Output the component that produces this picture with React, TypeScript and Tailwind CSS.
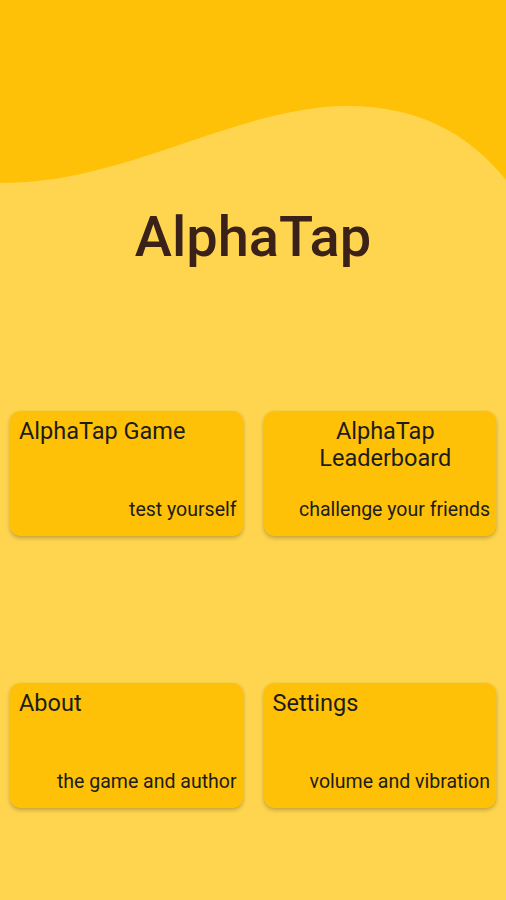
import React from 'react';

type Card = {
  title: string;
  sub: string;
  center?: boolean;
};

const rows: Card[][] = [
  [
    { title: 'AlphaTap Game', sub: 'test yourself' },
    { title: 'AlphaTap Leaderboard', sub: 'challenge your friends', center: true },
  ],
  [
    { title: 'About', sub: 'the game and author' },
    { title: 'Settings', sub: 'volume and vibration' },
  ],
];

function MenuCard({ title, sub, center }: Card) {
  return (
    <div className="h-[125px] rounded-[10px] bg-[#FFC107] shadow-[0_2px_4px_rgba(0,0,0,0.25)] flex flex-col justify-between pl-[9px] pr-[6px] pt-[7px] pb-[15px]">
      <div
        className={
          center
            ? 'text-[23.5px] leading-[27px] text-[#1c1c1c] text-center pl-[38px] pr-[30px]'
            : 'text-[23.5px] leading-[27px] text-[#1c1c1c]'
        }
      >
        {title}
      </div>
      <div className="text-[19.5px] leading-[22px] text-[#1c1c1c] text-right">{sub}</div>
    </div>
  );
}

export default function App() {
  return (
    <div
      className="w-[506px] h-[900px] overflow-hidden bg-[#FFD54F]"
      style={{ fontFamily: 'Roboto, "Noto Sans", sans-serif' }}
    >
      {/* wave header */}
      <svg width="506" height="183" viewBox="0 0 506 183" className="block">
        <path
          d="M0 183 C60 183 110 168 170 148 C230 128 290 106 347 106 C420 106 470 135 506 180 V0 H0 Z"
          fill="#FFC107"
        />
      </svg>

      <h1 className="mt-[21px] text-center text-[56px] leading-[66px] font-medium text-[#3b2218]">
        AlphaTap
      </h1>

      <div className="mt-[141px] px-[10px] flex flex-col gap-[147px]">
        {rows.map((row, i) => (
          <div key={i} className="grid grid-cols-2 gap-[21px]">
            {row.map((c) => (
              <MenuCard key={c.title} {...c} />
            ))}
          </div>
        ))}
      </div>
    </div>
  );
}
